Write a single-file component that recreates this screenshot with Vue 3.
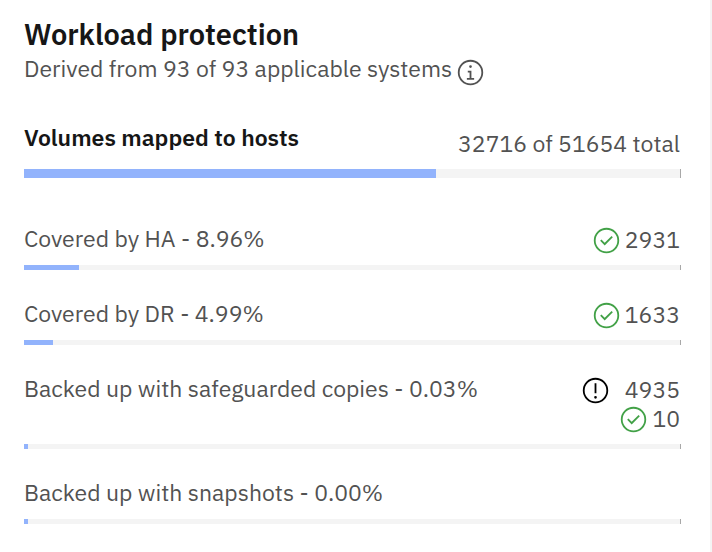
<script setup>
const summary = { label: 'Volumes mapped to hosts', value: '32716 of 51654 total', fill: 62.8 }

const rows = [
  { label: 'Covered by HA - 8.96%', fill: 8.4, counts: [{ status: 'ok', value: '2931' }] },
  { label: 'Covered by DR - 4.99%', fill: 4.45, counts: [{ status: 'ok', value: '1633' }] },
  {
    label: 'Backed up with safeguarded copies - 0.03%',
    fill: 0.03,
    counts: [
      { status: 'warning', value: '4935' },
      { status: 'ok', value: '10' },
    ],
  },
  { label: 'Backed up with snapshots - 0.00%', fill: 0, counts: [] },
]
</script>

<template>
  <main class="card">
    <h1 class="title">Workload protection</h1>
    <div class="subtitle">
      <span>Derived from 93 of 93 applicable systems</span>
      <button class="info" type="button" aria-label="More information">
        <svg class="icon" viewBox="0 0 32 32" aria-hidden="true">
          <path d="M17 22v-8h-4v2h2v6h-3v2h8v-2zM16 8a1.5 1.5 0 1 0 1.500 1.500A1.500 1.500 0 0 0 16 8z" />
          <path d="M16 30a14 14 0 1 1 14-14 14 14 0 0 1-14 14zm0-26a12 12 0 1 0 12 12A12 12 0 0 0 16 4z" />
        </svg>
      </button>
    </div>

    <section class="summary">
      <div class="head">
        <h2 class="label strong">{{ summary.label }}</h2>
        <div class="total">{{ summary.value }}</div>
      </div>
      <div class="bar thick" role="progressbar" :aria-label="summary.label" :aria-valuenow="summary.fill">
        <div class="fill" :style="{ width: summary.fill + '%' }"></div>
      </div>
    </section>

    <section class="rows">
      <div v-for="row in rows" :key="row.label">
        <div class="head">
          <div class="label">{{ row.label }}</div>
          <div class="counts">
            <div v-for="count in row.counts" :key="count.value" class="count" :class="count.status">
              <svg class="icon" viewBox="0 0 32 32" aria-hidden="true">
                <path d="M16 2a14 14 0 1 0 14 14A14 14 0 0 0 16 2zm0 26a12 12 0 1 1 12-12 12 12 0 0 1-12 12z" />
                <path v-if="count.status === 'ok'" d="M14 21.410l-5-5L10.410 15 14 18.590 21.590 11 23 12.410z" />
                <path v-else d="M15 8h2v11h-2zM16 22a1.500 1.500 0 1 0 1.500 1.500A1.500 1.500 0 0 0 16 22z" />
              </svg>
              <span>{{ count.value }}</span>
            </div>
          </div>
        </div>
        <div class="bar" role="progressbar" :aria-label="row.label" :aria-valuenow="row.fill">
          <div class="fill" :style="{ width: row.fill + '%' }"></div>
        </div>
      </div>
    </section>
  </main>
</template>

<style>
body {
  margin: 0;
  background: #ffffff;
}
</style>

<style scoped>
.card {
  box-sizing: border-box;
  min-height: 100vh;
  padding: 17px 29px 28px 24px;
  border-right: 2px solid #f4f4f4;
  color: #525252;
  font-family: "IBM Plex Sans", "Noto Sans", sans-serif;
  font-size: 23px;
  line-height: 26px;
}

.title {
  margin: 0;
  color: #161616;
  font-size: 29px;
  font-weight: 600;
  line-height: 34px;
}

.subtitle {
  display: flex;
  gap: 4px;
  margin-top: 4px;
}

.info {
  display: flex;
  height: 28px;
  padding: 3px 0 0;
  border: 0;
  background: none;
  color: inherit;
}

.icon {
  flex: none;
  width: 29px;
  height: 29px;
  fill: currentColor;
}

.summary {
  margin-top: 41px;
}

.head {
  display: flex;
  justify-content: space-between;
  min-height: 30px;
}

.label {
  margin: 0;
  font-size: 23px;
  font-weight: 400;
}

.strong {
  color: #161616;
  font-weight: 600;
}

.total {
  padding: 6px 1px 0 0;
}

.rows {
  display: grid;
  gap: 30px;
  margin-top: 47px;
}

.counts {
  padding: 1px 1px 0 0;
}

.count {
  display: flex;
  align-items: flex-start;
  justify-content: flex-end;
  gap: 4px;
  height: 29px;
}

.ok .icon {
  fill: #42a147;
}

.warning {
  gap: 15px;
}

.warning .icon {
  fill: #000000;
}

.bar {
  height: 5px;
  margin-top: 10px;
  border-right: 1px solid #a8a8a8;
  background: #f4f4f4;
}

.thick {
  height: 9px;
  margin-top: 13px;
}

.fill {
  min-width: 4px;
  height: 100%;
  background: #92b3fc;
}
</style>
